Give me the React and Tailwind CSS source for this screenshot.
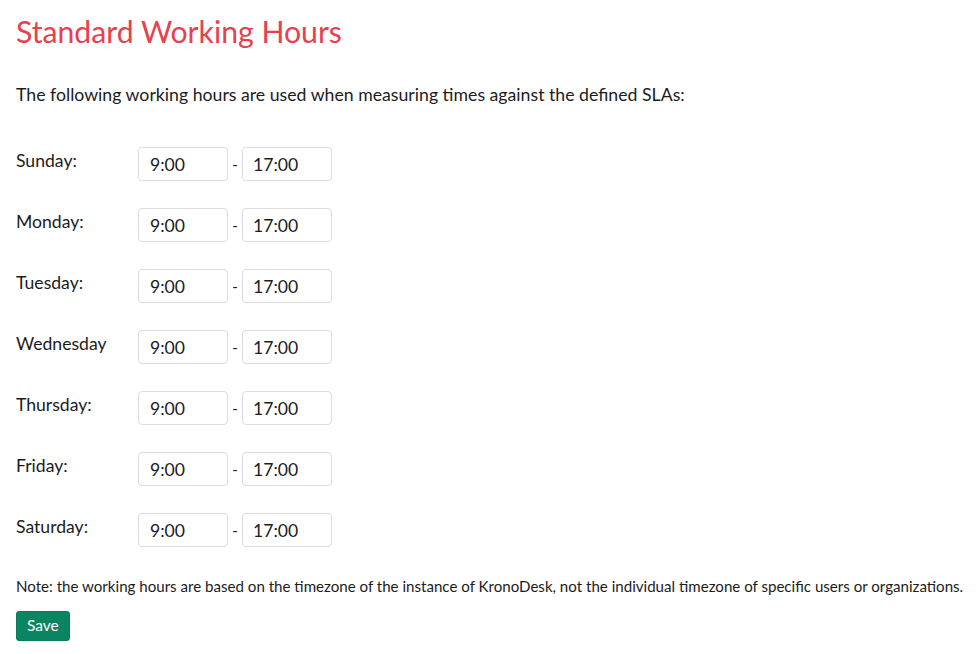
import React from 'react';

const days = ['Sunday:', 'Monday:', 'Tuesday:', 'Wednesday', 'Thursday:', 'Friday:', 'Saturday:'];

export default function App() {
  return (
    <div className="min-h-screen bg-white px-4 pt-[13px] text-[#1c1c1c]" style={{ fontFamily: 'Lato, "Open Sans", sans-serif' }}>
      <h1 className="text-[30.2px] leading-[36px] text-[#e8404d]">Standard Working Hours</h1>

      <p className="mt-[34px] text-[17.7px] leading-[24px]">
        The following working hours are used when measuring times against the defined SLAs:
      </p>

      <div className="mt-[40px] flex flex-col gap-[27px]">
        {days.map(day => (
          <div key={day} className="flex items-center">
            <div className="w-[93px] whitespace-nowrap mr-[29px] text-[17.6px] leading-[24px] -mt-[7px]">{day}</div>
            <div className="w-[90px] h-[34px] border border-[#dcdcdc] rounded-[4px] pl-[11px] flex items-center text-[17.6px] pt-[2px]">9:00</div>
            <span className="w-[14px] text-center text-[15px]">-</span>
            <div className="w-[90px] h-[34px] border border-[#dcdcdc] rounded-[4px] pl-[10px] flex items-center text-[17.6px] pt-[2px]">17:00</div>
          </div>
        ))}
      </div>

      <p className="mt-[29px] text-[15.1px] leading-[20px] whitespace-nowrap">
        Note: the working hours are based on the timezone of the instance of KronoDesk, not the individual timezone of specific users or organizations.
      </p>

      <button className="mt-[15px] h-[30px] px-[10px] rounded-[3px] bg-[#0a8461] text-white text-[15.5px] border border-[#0a7a5a]">
        Save
      </button>
    </div>
  );
}
